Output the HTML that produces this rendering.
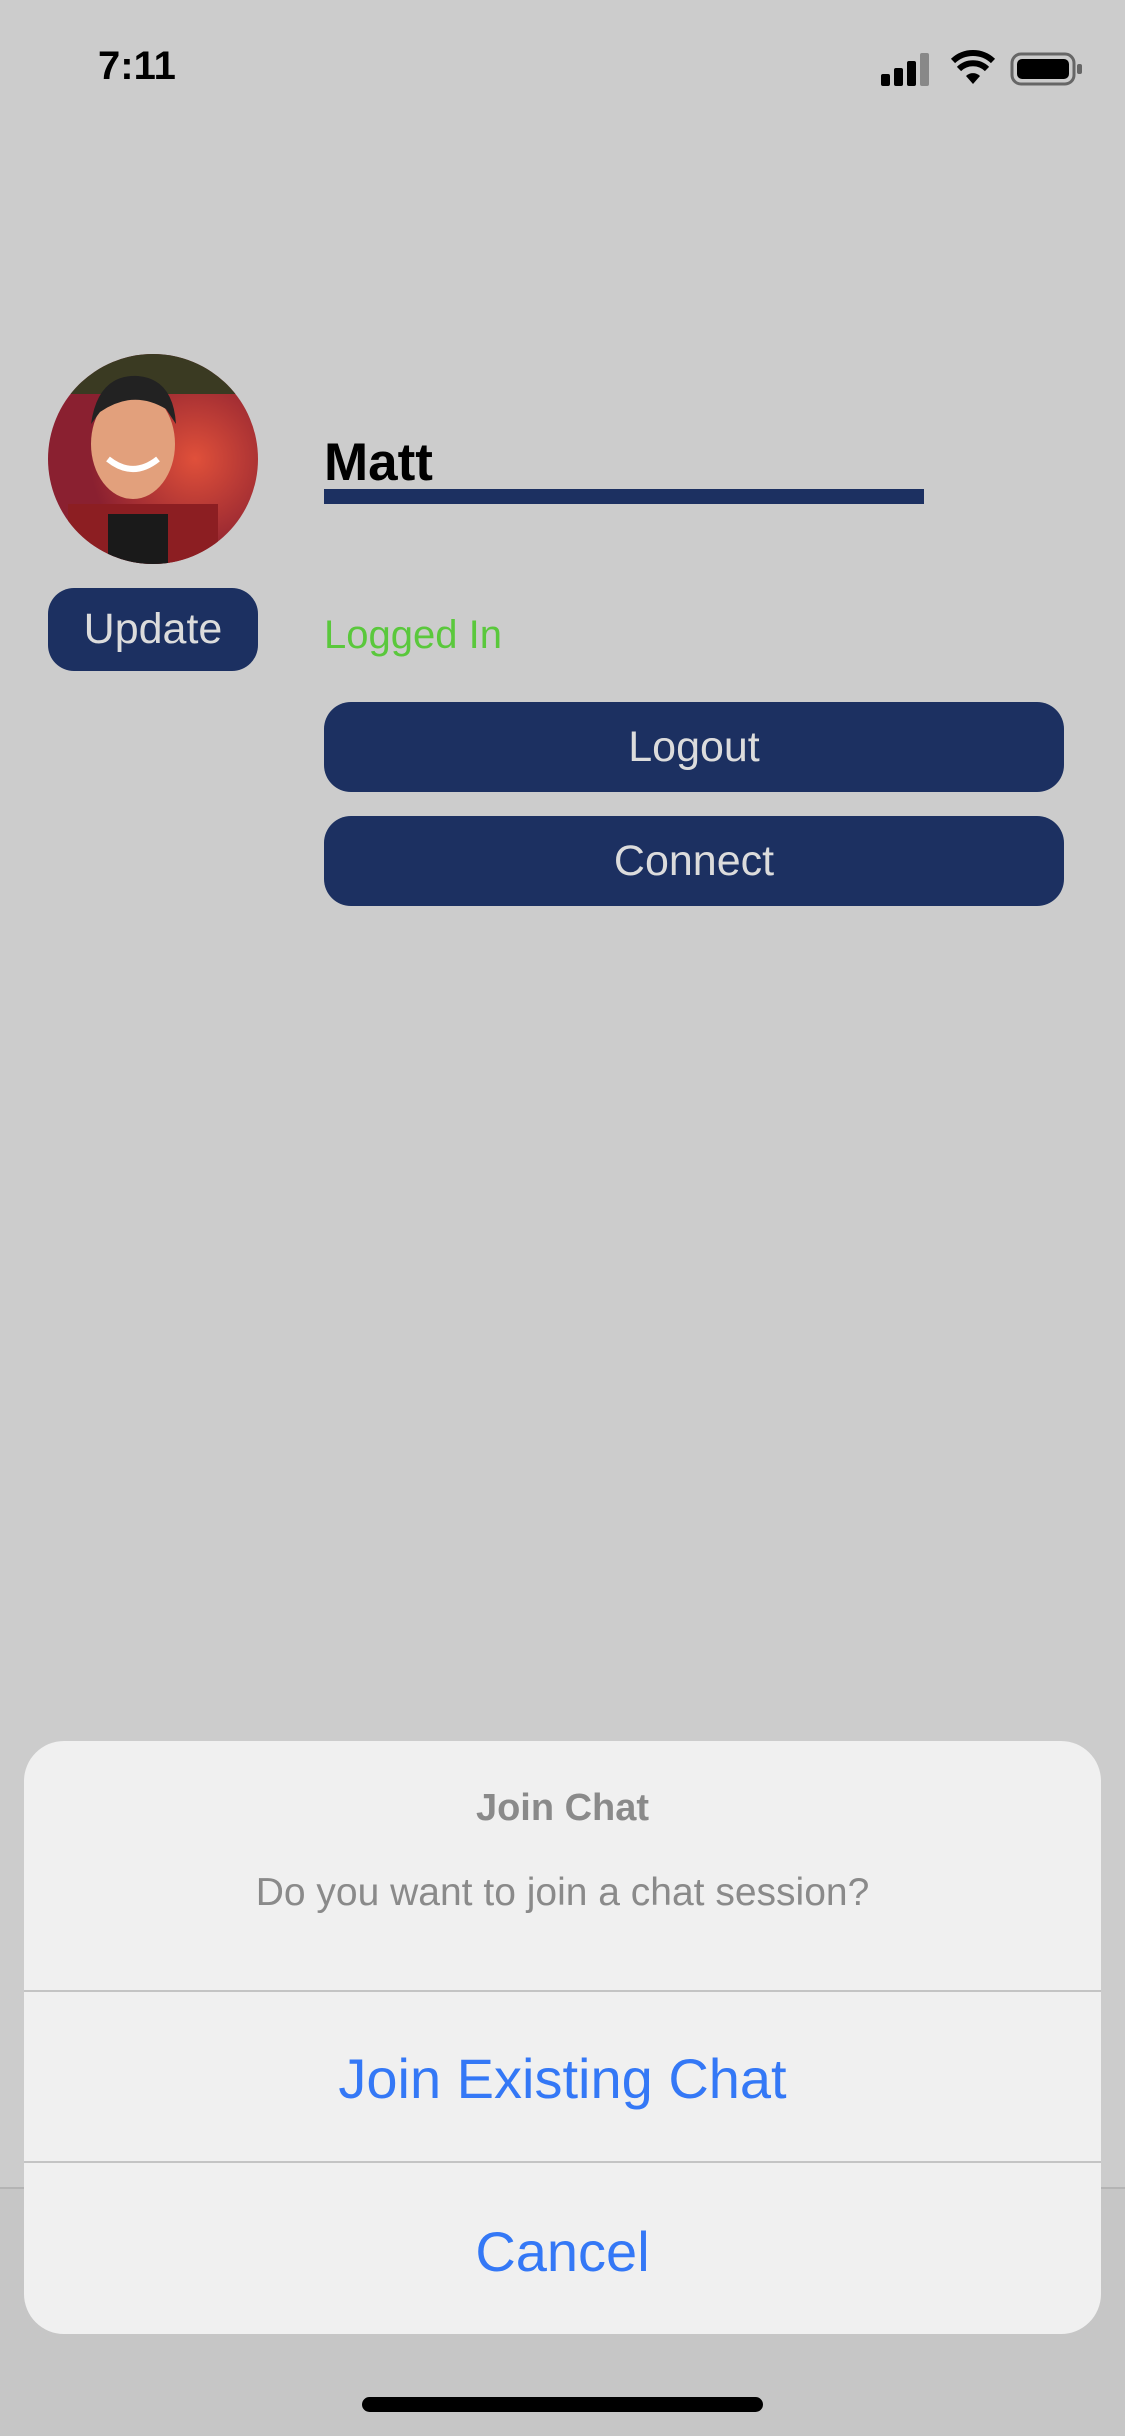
<!DOCTYPE html>
<html><head><meta charset="utf-8"><style>
*{margin:0;padding:0;box-sizing:border-box}
body{width:1125px;height:2436px;background:#cccccc;position:relative;overflow:hidden;font-family:"Liberation Sans",sans-serif}
.a{position:absolute}
.btn{position:absolute;background:#1c3061;color:#dcdcdc;display:flex;align-items:center;justify-content:center}
.sheet{position:absolute;left:24px;top:1741px;width:1077px;height:593px;background:#f0f0f0;border-radius:40px;overflow:hidden}
.c{position:absolute;left:0;width:100%;text-align:center}
</style></head><body>
<div class="a" style="left:0;top:2187px;width:1125px;height:249px;background:#c6c6c6;border-top:2px solid #b4b4b4"></div>
<div class="a" style="left:98px;top:44px;font-size:40px;font-weight:bold;color:#000">7:11</div>
<svg class="a" style="left:881px;top:52px" width="50" height="34"><rect x="0" y="22" width="9" height="12" rx="2"/><rect x="13" y="16" width="9" height="18" rx="2"/><rect x="26" y="9" width="9" height="25" rx="2"/><rect x="39" y="1" width="9" height="33" rx="2" fill="#888"/></svg>
<svg class="a" style="left:951px;top:50px" width="44" height="34" viewBox="0 0 44 34"><path d="M22 34 L15 26 A10 10 0 0 1 29 26 Z"/><path d="M8 19 A20 20 0 0 1 36 19" stroke="#000" stroke-width="6" fill="none"/><path d="M2 11 A29 29 0 0 1 42 11" stroke="#000" stroke-width="6" fill="none"/></svg>
<svg class="a" style="left:1010px;top:52px" width="74" height="34"><rect x="2" y="2" width="62" height="30" rx="9" fill="none" stroke="#666" stroke-width="3"/><rect x="7" y="7" width="52" height="20" rx="5"/><rect x="67" y="12" width="5" height="10" rx="2" fill="#666"/></svg>
<svg class="a" style="left:48px;top:354px" width="210" height="210" viewBox="0 0 210 210"><defs><clipPath id="cp"><circle cx="105" cy="105" r="105"/></clipPath><radialGradient id="g" cx="0.7" cy="0.5"><stop offset="0" stop-color="#e0503a"/><stop offset="1" stop-color="#8a2030"/></radialGradient></defs><g clip-path="url(#cp)"><rect width="210" height="210" fill="url(#g)"/><rect width="210" height="40" fill="#3a3a22"/><rect x="20" y="150" width="150" height="60" fill="#8c1e22"/><rect x="60" y="160" width="60" height="50" fill="#1a1a1a"/><ellipse cx="85" cy="90" rx="42" ry="55" fill="#e2a07c"/><path d="M43 70 Q50 20 90 22 Q125 25 128 70 L118 55 Q85 35 52 58 Z" fill="#222"/><path d="M60 105 Q85 125 110 105" stroke="#fff" stroke-width="6" fill="none"/></g></svg>
<div class="btn" style="left:48px;top:588px;width:210px;height:83px;border-radius:26px;font-size:43px">Update</div>
<div class="a" style="left:324px;top:432px;font-size:53px;font-weight:bold;color:#000">Matt</div>
<div class="a" style="left:324px;top:489px;width:600px;height:15px;background:#1c3061"></div>
<div class="a" style="left:324px;top:613px;font-size:40px;color:#5ac83c">Logged In</div>
<div class="btn" style="left:324px;top:702px;width:740px;height:90px;border-radius:27px;font-size:43px">Logout</div>
<div class="btn" style="left:324px;top:816px;width:740px;height:90px;border-radius:27px;font-size:43px">Connect</div>
<div class="sheet">
<div class="c" style="top:46px;font-size:38px;font-weight:bold;color:#8a8a8a">Join Chat</div>
<div class="c" style="top:130px;font-size:39px;color:#8a8a8a">Do you want to join a chat session?</div>
<div class="a" style="left:0;top:249px;width:100%;height:2px;background:#c4c4c4"></div>
<div class="c" style="top:305px;font-size:56px;color:#3478f6">Join Existing Chat</div>
<div class="a" style="left:0;top:420px;width:100%;height:2px;background:#c4c4c4"></div>
<div class="c" style="top:478px;font-size:56px;color:#3478f6">Cancel</div>
</div>
<div class="a" style="left:362px;top:2397px;width:401px;height:15px;border-radius:8px;background:#000"></div>
</body></html>
